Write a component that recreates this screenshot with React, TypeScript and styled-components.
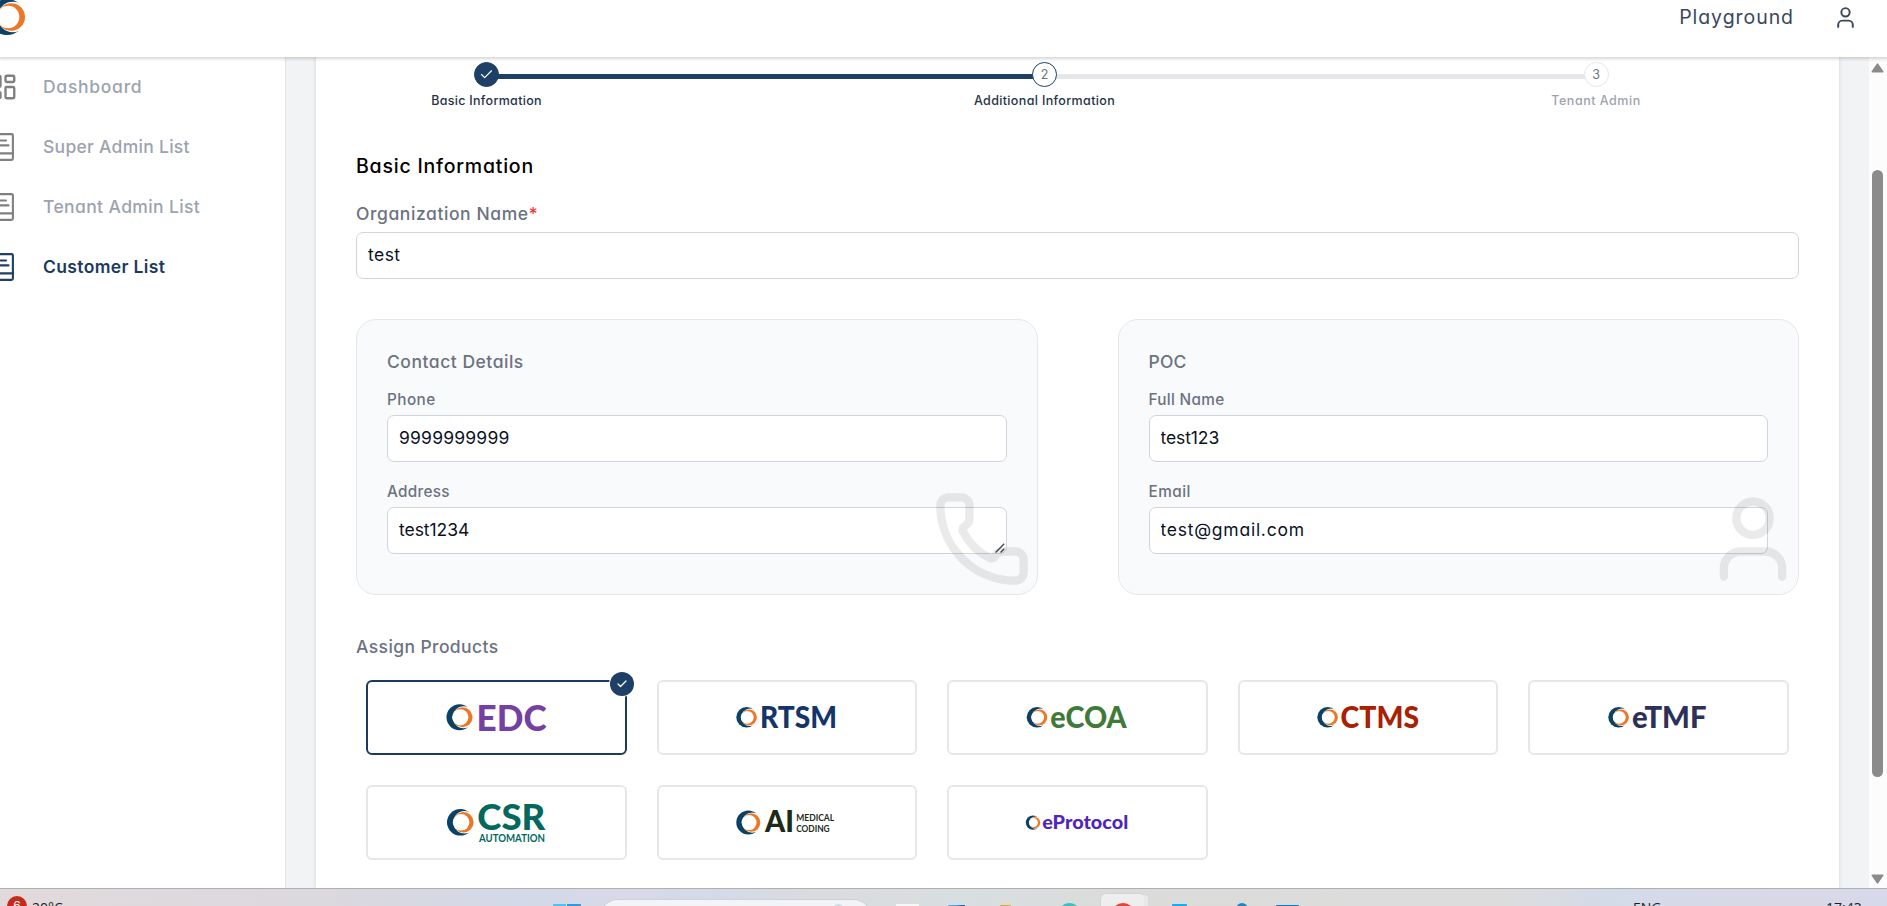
import React from "react";
import styled, { createGlobalStyle } from "styled-components";
import { Check, LayoutDashboard, Phone, User } from "lucide-react";

const navy = "#1e3f66";

const GlobalStyle = createGlobalStyle`
  *, *::before, *::after { box-sizing: border-box; }
  body {
    margin: 0;
    overflow: hidden;
    background: #fff;
    font-family: Inter, "Liberation Sans", sans-serif;
    font-feature-settings: "cv11";
  }
`;

const Screen = styled.div`
  display: flex;
  flex-direction: column;
  width: 100vw;
  height: 906px;
  overflow: hidden;
`;

const Header = styled.header`
  position: relative;
  z-index: 3;
  display: flex;
  justify-content: space-between;
  flex: none;
  height: 57px;
  background: #fff;
  box-shadow: 0 1px 3px 1px rgba(0, 0, 0, 0.16);
`;

const Brand = styled.div`
  margin: -1px 0 0 -11px;
`;

const Account = styled.div`
  display: flex;
  align-items: flex-start;
  padding: 5px 29px 0 0;
  color: #3b475a;
`;

const AccountName = styled.span`
  margin-right: 39px;
  font-size: 19.5px;
  line-height: 24px;
  letter-spacing: 0.95px;
`;

const Body = styled.div`
  display: flex;
  flex: none;
  height: 831px;
`;

const Sidebar = styled.nav`
  flex: none;
  width: 286px;
  border-right: 1px solid #e3e5e8;
`;

const NavItem = styled.a<{ $active?: boolean }>`
  display: flex;
  align-items: center;
  height: 60px;
  color: ${(p) => (p.$active ? "#1c3a5f" : "#9ca3af")};
  font-weight: ${(p) => (p.$active ? 600 : 500)};
`;

const NavText = styled.span<{ $spacing: number }>`
  padding-bottom: 2px;
  font-size: 17.5px;
  letter-spacing: ${(p) => p.$spacing}px;
  white-space: nowrap;
`;

const NavIcon = styled.span<{ $active?: boolean }>`
  display: flex;
  justify-content: flex-end;
  flex: none;
  width: 30px;
  margin: 0 25px 0 -12px;
  color: ${(p) => (p.$active ? navy : "#808080")};
`;

const ListGlyph = styled.svg`
  flex: none;
  margin-right: 4px;
`;

const Content = styled.main`
  display: flex;
  flex: 1;
  padding: 0 30px;
  background: #f2f3f5;
`;

const Panel = styled.section`
  flex: 1;
  padding: 5px 40px 0;
  background: #fff;
  box-shadow: 0 0 4px rgba(0, 0, 0, 0.14);
`;

const Stepper = styled.div`
  display: flex;
  margin: 0 158px 0 75px;
`;

const Step = styled.div<{ $width: number; $muted?: boolean }>`
  position: relative;
  z-index: 1;
  display: flex;
  flex-direction: column;
  align-items: center;
  flex: none;
  gap: 4px;
  width: ${(p) => p.$width}px;
  color: ${(p) => (p.$muted ? "#9ca3af" : "#1f3247")};
`;

const StepDot = styled.span<{ $state: "done" | "current" | "next" }>`
  display: flex;
  align-items: center;
  justify-content: center;
  width: 25px;
  height: 25px;
  border: 1px solid ${(p) => (p.$state === "next" ? "#e5e7eb" : navy)};
  border-radius: 50%;
  background: ${(p) => (p.$state === "done" ? navy : "#fff")};
  color: ${(p) => (p.$state === "done" ? "#fff" : "#6b7280")};
  font-size: 12.5px;
`;

const StepLabel = styled.span<{ $spacing: number }>`
  font-size: 12.5px;
  font-weight: 500;
  line-height: 19px;
  letter-spacing: ${(p) => p.$spacing}px;
  white-space: nowrap;
`;

const StepLine = styled.div<{ $done?: boolean; $from: number; $to: number }>`
  flex: 1;
  height: 5px;
  margin: 12px -${(p) => p.$to}px 0 -${(p) => p.$from}px;
  background: ${(p) => (p.$done ? navy : "#e6e7eb")};
`;

const Heading = styled.h2`
  margin: 41px 0 20px;
  color: #000;
  font-size: 19.5px;
  font-weight: 500;
  line-height: 30px;
  letter-spacing: 0.78px;
`;

const FieldLabel = styled.label<{ $spacing: number }>`
  display: block;
  margin-bottom: 5px;
  color: #6b7280;
  font-size: 17.5px;
  font-weight: 500;
  line-height: 26px;
  letter-spacing: ${(p) => p.$spacing}px;
`;

const Required = styled.span`
  color: #fb2c36;
  font-weight: 400;
`;

const SmallLabel = styled.label<{ $top: number; $spacing: number }>`
  display: block;
  margin: ${(p) => p.$top}px 0 5px;
  color: #6b7280;
  font-size: 15.3px;
  font-weight: 450;
  line-height: 21px;
  letter-spacing: ${(p) => p.$spacing}px;
`;

const Input = styled.input<{ $spacing: number }>`
  display: block;
  width: 100%;
  height: 47px;
  padding: 0 11px 2px;
  border: 1px solid #d1d5db;
  border-radius: 7px;
  outline: none;
  background: #fff;
  color: #0c121f;
  font: inherit;
  font-size: 17.5px;
  font-feature-settings: inherit;
  letter-spacing: ${(p) => p.$spacing}px;
`;

const TextArea = styled(Input)`
  padding: 8px 11px 0;
  line-height: 27px;
  overflow: hidden;
  resize: none;
`;

const ResizeGrip = styled.svg`
  position: absolute;
  right: 32px;
  bottom: 41px;
`;

const Groups = styled.div`
  display: grid;
  grid-template-columns: 1fr 1fr;
  gap: 80px;
  margin: 40px 0 39px;
`;

const Group = styled.div`
  position: relative;
  height: 276px;
  padding: 30px;
  border: 1px solid #e5e7eb;
  border-radius: 20px;
  background: #f9fafb;
`;

const GroupTitle = styled.h3<{ $spacing: number }>`
  margin: 0;
  color: #6b7280;
  font-size: 17.5px;
  font-weight: 500;
  line-height: 24px;
  letter-spacing: ${(p) => p.$spacing}px;
`;

const Watermark = styled.span<{ $right: number }>`
  position: absolute;
  right: ${(p) => p.$right}px;
  bottom: 5px;
  display: flex;
  color: #000;
  opacity: 0.08;
  pointer-events: none;
`;

const Products = styled.div`
  display: grid;
  grid-template-columns: repeat(5, 1fr);
  gap: 30px;
  margin: 20px 10px 0;
`;

const Tile = styled.div<{ $selected?: boolean }>`
  position: relative;
  display: flex;
  align-items: center;
  justify-content: center;
  height: 75px;
  border: 2px solid ${(p) => (p.$selected ? "#1c3a5f" : "#e5e7eb")};
  border-radius: 6px;
  background: #fff;
`;

const TileCheck = styled.span`
  position: absolute;
  top: -10px;
  right: -9px;
  display: flex;
  align-items: center;
  justify-content: center;
  width: 24px;
  height: 24px;
  border-radius: 50%;
  background: ${navy};
  box-shadow: 0 0 0 1px #fff;
  color: #fff;
`;

const ScrollTrack = styled.div`
  display: flex;
  flex-direction: column;
  align-items: center;
  flex: none;
  width: 18px;
  padding: 6px 3px 4px 2px;
  background: #fcfcfc;
`;

const ScrollThumb = styled.div`
  width: 11px;
  height: 607px;
  margin: 97px 0;
  border-radius: 6px;
  background: #8b8b8b;
`;

const Taskbar = styled.footer`
  display: flex;
  flex: none;
  height: 18px;
  overflow: hidden;
  border-top: 1px solid #afafb2;
  background: linear-gradient(90deg, #e1dadc 0, #dbd8de 330px, #d3d9e8 520px, #d8d9e6 620px, #d3dae8 710px, #dadbdd 830px, #d8dfe0 960px, #dbdbda 1130px, #dcdcdc 1500px, #d3dbe9 1610px, #d9d8e6 1780px, #d6d9ea 100%);
`;

const WeatherBadge = styled.span`
  flex: none;
  width: 20px;
  height: 20px;
  margin: 7px 5px 0 7px;
  border-radius: 50%;
  background: #c42b1c;
  color: #fff;
  font-size: 12px;
  line-height: 20px;
  text-align: center;
  box-shadow: -2px 4px 0 -1px #f3c231;
`;

const TaskText = styled.span<{ $width: number; $left?: number }>`
  flex: none;
  width: ${(p) => p.$width}px;
  margin: 10px 0 0 ${(p) => p.$left ?? 0}px;
  color: #1d1d1f;
  font: 14px/18px "Open Sans", sans-serif;
  white-space: nowrap;
`;

const TaskIcon = styled.span<{ $left: number; $width: number; $top: number; $fill: string; $round?: boolean }>`
  flex: none;
  width: ${(p) => p.$width}px;
  height: ${(p) => p.$width}px;
  margin: ${(p) => p.$top}px 0 0 ${(p) => p.$left}px;
  border-radius: ${(p) => (p.$round ? "50%" : "1px")};
  background: ${(p) => p.$fill};
`;

const SearchBox = styled.div`
  display: flex;
  justify-content: flex-end;
  flex: none;
  width: 273px;
  height: 38px;
  margin: 10px 0 0 18px;
  padding: 4px 27px;
  border: 1px solid #cfd0d5;
  border-radius: 19px;
  background: #f3f4f7;
`;

const SearchArt = styled.span`
  width: 11px;
  height: 11px;
  border-radius: 50%;
  background: #c7dde4;
`;

const ActiveTask = styled.div`
  display: flex;
  justify-content: center;
  flex: none;
  width: 43px;
  height: 40px;
  margin: 5px 0 0 20px;
  border-radius: 5px;
  background: #eeeeee;
  box-shadow: 5px 0 0 -1px #e8e8e8, 0 0 0 1px #d4d4d4;
`;

/* Navy crescent wrapped around an orange one, drawn in a 26-unit box. */
function RingShape() {
  return (
    <>
      <circle cx="13" cy="13" r="13" fill="#0b4067" />
      <circle cx="17.2" cy="13" r="11" fill="#fff" />
      <circle cx="16" cy="13" r="10" fill="#ee7625" />
      <circle cx="13.8" cy="13" r="8.1" fill="#fff" />
    </>
  );
}

type Word = { text: string; x: number; base: number; width: number; size: number };
type Product = { name: string; color: string; ring: [number, number, number]; words: Word[]; selected?: boolean };

const products: Product[] = [
  { name: "edc", color: "#7441a3", ring: [78.5, 22.3, 26], selected: true, words: [{ text: "EDC", x: 108.6, base: 48.8, width: 70, size: 36.6 }] },
  { name: "rtsm", color: "#15356a", ring: [77.3, 25, 20.6], words: [{ text: "RTSM", x: 101, base: 45.8, width: 77, size: 29.5 }] },
  { name: "ecoa", color: "#3f7a38", ring: [77.7, 25, 20.6], words: [{ text: "eCOA", x: 101.2, base: 45.8, width: 76.5, size: 29.5 }] },
  { name: "ctms", color: "#a82103", ring: [77.3, 25, 20.6], words: [{ text: "CTMS", x: 100.6, base: 45.8, width: 78.5, size: 29.5 }] },
  { name: "etmf", color: "#2c3159", ring: [77.3, 25, 20.6], words: [{ text: "eTMF", x: 101, base: 45.8, width: 74.5, size: 29.5 }] },
  {
    name: "csr",
    color: "#04685e",
    ring: [79, 22, 26.6],
    words: [
      { text: "CSR", x: 109.3, base: 43.2, width: 68, size: 35.5 },
      { text: "AUTOMATION", x: 111, base: 54.8, width: 66, size: 10.4 },
    ],
  },
  {
    name: "ai",
    color: "#1c2b18",
    ring: [77.3, 23.6, 24],
    words: [
      { text: "AI", x: 106, base: 45.2, width: 29, size: 29.5 },
      { text: "MEDICAL", x: 137.2, base: 33.8, width: 38, size: 9.4 },
      { text: "CODING", x: 137.2, base: 44.8, width: 33.5, size: 9.4 },
    ],
  },
  { name: "eprotocol", color: "#4f26bb", ring: [76.8, 28.4, 14.4], words: [{ text: "eProtocol", x: 93.2, base: 42, width: 86, size: 19 }] },
];

function ProductLogo({ product }: { product: Product }) {
  const [x, y, size] = product.ring;
  return (
    <svg width="256" height="71" viewBox="0 0 256 71" role="img" aria-label={product.name}>
      <g transform={`translate(${x} ${y}) scale(${size / 26})`}>
        <RingShape />
      </g>
      {product.words.map((w) => (
        <text
          key={w.text}
          x={w.x}
          y={w.base}
          textLength={w.width}
          lengthAdjust="spacingAndGlyphs"
          fill={product.color}
          fontFamily="Lato, sans-serif"
          fontWeight={w.size < 12 ? 700 : 900}
          fontSize={w.size}
        >
          {w.text}
        </text>
      ))}
    </svg>
  );
}

function ListIcon() {
  return (
    <ListGlyph width="24" height="28" viewBox="0 0 24 28" fill="none" stroke="currentColor" strokeWidth="2.1" strokeLinecap="round" strokeLinejoin="round">
      <rect x="1" y="1.1" width="21.9" height="25.8" rx="1.4" />
      <path d="M1 20.4h22M6 7.5h10M6 12.4h12.5" />
    </ListGlyph>
  );
}

const navItems = [
  { label: "Dashboard", spacing: 0.72 },
  { label: "Super Admin List", spacing: 0.28 },
  { label: "Tenant Admin List", spacing: 0.38 },
  { label: "Customer List", spacing: 0.36, active: true },
];

export default function App() {
  return (
    <Screen>
      <GlobalStyle />
      <Header>
        <Brand>
          <svg width="36" height="36" viewBox="0 0 26 26">
            <RingShape />
          </svg>
        </Brand>
        <Account>
          <AccountName>Playground</AccountName>
          <User size={25} strokeWidth={1.9} />
        </Account>
      </Header>
      <Body>
        <Sidebar>
          {navItems.map((item) => (
            <NavItem key={item.label} $active={item.active}>
              <NavIcon $active={item.active}>
                {item.label === "Dashboard" ? <LayoutDashboard size={30} strokeWidth={1.9} /> : <ListIcon />}
              </NavIcon>
              <NavText $spacing={item.spacing}>{item.label}</NavText>
            </NavItem>
          ))}
        </Sidebar>
        <Content>
          <Panel>
            <Stepper>
              <Step $width={111}>
                <StepDot $state="done">
                  <Check size={15} strokeWidth={1.8} />
                </StepDot>
                <StepLabel $spacing={0.3}>Basic Information</StepLabel>
              </Step>
              <StepLine $done $from={44} $to={60} />
              <Step $width={142}>
                <StepDot $state="current">2</StepDot>
                <StepLabel $spacing={0.36}>Additional Information</StepLabel>
              </Step>
              <StepLine $from={62} $to={38} />
              <Step $width={90} $muted>
                <StepDot $state="next">3</StepDot>
                <StepLabel $spacing={0.52}>Tenant Admin</StepLabel>
              </Step>
            </Stepper>

            <Heading>Basic Information</Heading>
            <FieldLabel $spacing={0.58}>
              Organization Name<Required>*</Required>
            </FieldLabel>
            <Input $spacing={0.45} defaultValue="test" />

            <Groups>
              <Group>
                <GroupTitle $spacing={0.52}>Contact Details</GroupTitle>
                <SmallLabel $top={15} $spacing={0.45}>Phone</SmallLabel>
                <Input $spacing={0.2} defaultValue="9999999999" />
                <SmallLabel $top={19} $spacing={0.3}>Address</SmallLabel>
                <TextArea as="textarea" $spacing={-0.05} defaultValue="test1234" />
                <ResizeGrip width="10" height="10" viewBox="0 0 10 10" fill="none" stroke="#4b4b4b" strokeWidth="1.4">
                  <path d="M.6 9.4 9.2.8M5.6 9.4l3.6-3.6" />
                </ResizeGrip>
                <Watermark $right={5}>
                  <Phone size={100} />
                </Watermark>
              </Group>
              <Group>
                <GroupTitle $spacing={0.2}>POC</GroupTitle>
                <SmallLabel $top={15} $spacing={0.32}>Full Name</SmallLabel>
                <Input $spacing={-0.1} defaultValue="test123" />
                <SmallLabel $top={19} $spacing={0.5}>Email</SmallLabel>
                <Input $spacing={0.75} defaultValue="test@gmail.com" />
                <Watermark $right={-5}>
                  <User size={100} />
                </Watermark>
              </Group>
            </Groups>

            <FieldLabel as="div" $spacing={0.4}>Assign Products</FieldLabel>
            <Products>
              {products.map((product) => (
                <Tile key={product.name} $selected={product.selected}>
                  <ProductLogo product={product} />
                  {product.selected && (
                    <TileCheck>
                      <Check size={12} strokeWidth={2.6} />
                    </TileCheck>
                  )}
                </Tile>
              ))}
            </Products>
          </Panel>
        </Content>
        <ScrollTrack>
          <svg width="13" height="10" viewBox="0 0 13 10">
            <path d="M6.5 1.2 11.7 8.8H1.3Z" fill="#8b8b8b" stroke="#8b8b8b" strokeWidth="1.6" strokeLinejoin="round" />
          </svg>
          <ScrollThumb />
          <svg width="13" height="10" viewBox="0 0 13 10">
            <path d="M6.5 8.8 11.7 1.2H1.3Z" fill="#8b8b8b" stroke="#8b8b8b" strokeWidth="1.6" strokeLinejoin="round" />
          </svg>
        </ScrollTrack>
      </Body>
      <Taskbar>
        <WeatherBadge>6</WeatherBadge>
        <TaskText $width={521}>20°C</TaskText>
        <TaskIcon $left={0} $width={28} $top={15} $fill="linear-gradient(90deg, #4cc2f5 13px, #d6e4ee 13px, #d6e4ee 14px, #2b9ae0 14px)" />
        <SearchBox>
          <SearchArt />
        </SearchBox>
        <TaskIcon $left={24} $width={23} $top={15} $fill="#f7f7f7" />
        <TaskIcon $left={29} $width={17} $top={16} $fill="linear-gradient(90deg, #3fa9f5 8px, #1238a8)" />
        <TaskIcon $left={35} $width={11} $top={16} $fill="#e0a816" />
        <TaskIcon $left={47} $width={23} $top={14} $fill="linear-gradient(90deg, #25b5e8, #3fcf9a)" $round />
        <ActiveTask>
          <TaskIcon $left={0} $width={24} $top={9} $fill="#ea4335" $round />
        </ActiveTask>
        <TaskIcon $left={28} $width={15} $top={15} $fill="#12aef5" />
        <TaskIcon $left={49} $width={12} $top={14} $fill="#1a86c8" $round />
        <TaskIcon $left={28} $width={23} $top={16} $fill="#1377c9" />
        <TaskText $left={334} $width={30}>ENG</TaskText>
        <TaskText $left={163} $width={40}>17:43</TaskText>
      </Taskbar>
    </Screen>
  );
}
